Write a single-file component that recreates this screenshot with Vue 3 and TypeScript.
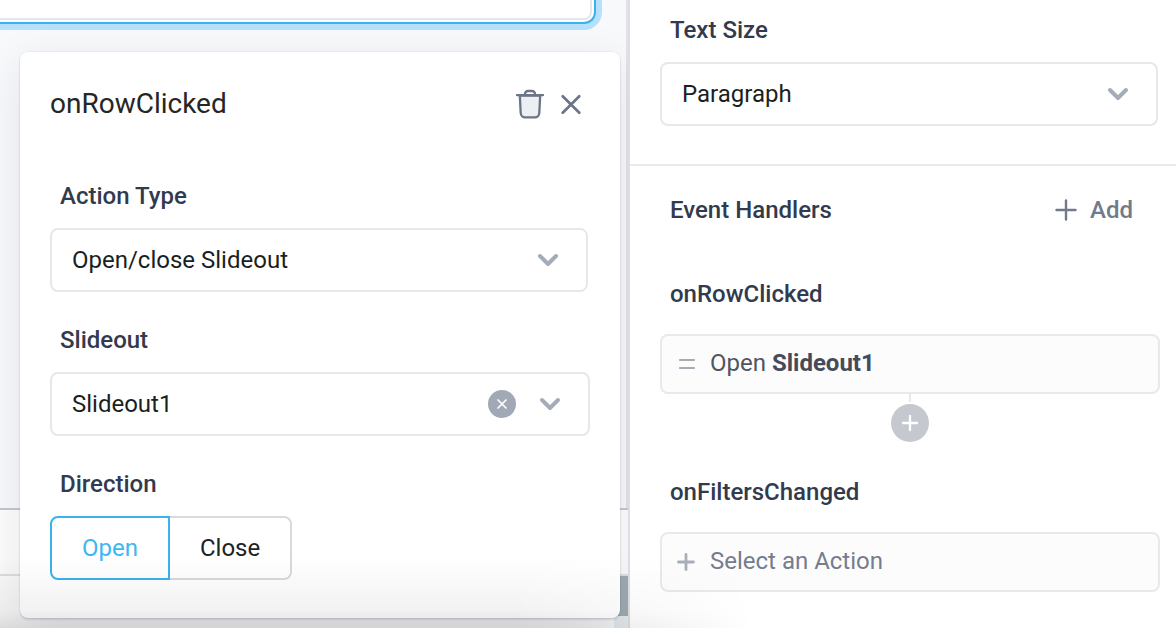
<script setup lang="ts">
import { ref } from 'vue'

type Direction = 'Open' | 'Close'

const textSize = ref('Paragraph')
const actionType = ref('Open/close Slideout')
const slideout = ref('Slideout1')
const direction = ref<Direction>('Open')
const directions: Direction[] = ['Open', 'Close']
</script>

<template>
  <div class="app">
    <main class="canvas">
      <div class="stage">
        <div class="workspace">
          <div class="selected"><div class="selected-inner"></div></div>
        </div>
        <div class="dock">
          <div class="dock-bar"></div>
          <div class="dock-body"></div>
          <div class="dock-foot"></div>
        </div>
      </div>

      <form class="popover" @submit.prevent>
        <header class="popover-head">
          <h2>onRowClicked</h2>
          <button type="button" class="icon-button" aria-label="Delete handler">
            <svg width="30" height="32" viewBox="0 0 30 32" fill="none" stroke="#6b7488" stroke-width="2.300" stroke-linecap="round" stroke-linejoin="round">
              <path d="M4.800 7.500 5.700 25a4.500 4.500 0 0 0 4.500 4.300h9.600a4.500 4.500 0 0 0 4.500-4.300L25.200 7.500Z" fill="#edf0f2" />
              <path d="M2 7.200h26M10 7V6A3 3 0 0 1 13 3h4a3 3 0 0 1 3 3V7" />
            </svg>
          </button>
          <button type="button" class="icon-button" aria-label="Close editor">
            <svg width="20" height="20" viewBox="0 0 20 20" fill="none" stroke="#6b7488" stroke-width="2.700" stroke-linecap="round">
              <path d="m1.700 2.200 16.600 16.600m0-16.600-16.600 16.600" />
            </svg>
          </button>
        </header>

        <div class="field action-field">
          <label class="label" for="action-type">Action Type</label>
          <div class="select">
            <select id="action-type" v-model="actionType">
              <option>Open/close Slideout</option>
            </select>
            <svg class="chevron" width="20" height="12" viewBox="0 0 20 12"><path d="m2 2 8 8 8-8" /></svg>
          </div>
        </div>

        <div class="field">
          <label class="label" for="slideout">Slideout</label>
          <div class="select">
            <select id="slideout" v-model="slideout">
              <option>Slideout1</option>
            </select>
            <button type="button" class="clear" aria-label="Clear slideout" @click="slideout = ''">
              <svg width="10" height="10" viewBox="0 0 10 10" fill="none" stroke="#fff" stroke-width="1.700" stroke-linecap="round">
                <path d="m1 1 8 8m0-8-8 8" />
              </svg>
            </button>
            <svg class="chevron" width="20" height="12" viewBox="0 0 20 12"><path d="m2 2 8 8 8-8" /></svg>
          </div>
        </div>

        <fieldset class="field">
          <legend class="label">Direction</legend>
          <div class="segments">
            <label v-for="item in directions" :key="item" class="segment">
              <input v-model="direction" type="radio" name="direction" :value="item" />
              <span>{{ item }}</span>
            </label>
          </div>
        </fieldset>
      </form>
    </main>

    <aside class="inspector">
      <section class="style-section">
        <label class="label" for="text-size">Text Size</label>
        <div class="select">
          <select id="text-size" v-model="textSize">
            <option>Paragraph</option>
          </select>
          <svg class="chevron" width="20" height="12" viewBox="0 0 20 12"><path d="m2 2 8 8 8-8" /></svg>
        </div>
      </section>

      <section class="events">
        <header class="events-head">
          <h3 class="label">Event Handlers</h3>
          <button type="button" class="add">
            <svg width="22" height="22" viewBox="0 0 22 22" fill="none" stroke="currentColor" stroke-width="2.400" stroke-linecap="round">
              <path d="M11 1.500v19M1.500 11h19" />
            </svg>
            Add
          </button>
        </header>

        <div class="handler">
          <h4 class="label">onRowClicked</h4>
          <button type="button" class="action">
            <svg width="18" height="16" viewBox="0 0 18 16" stroke="#a7abb5" stroke-width="2.200" stroke-linecap="round">
              <path d="M2 5h14M2 13h14" />
            </svg>
            <span>Open <strong>Slideout1</strong></span>
          </button>
          <div class="connector"></div>
          <button type="button" class="append" aria-label="Add another action">
            <svg width="18" height="18" viewBox="0 0 18 18" stroke="#fff" stroke-width="2.300" stroke-linecap="round">
              <path d="M9 2v14M2 9h14" />
            </svg>
          </button>
        </div>

        <div class="handler">
          <h4 class="label">onFiltersChanged</h4>
          <button type="button" class="action empty">
            <svg width="18" height="18" viewBox="0 0 18 18" stroke="#a9aeb9" stroke-width="2.800" stroke-linecap="round">
              <path d="M8 2.500v15M.5 10h15" />
            </svg>
            <span>Select an Action</span>
          </button>
        </div>
      </section>
    </aside>

    <div class="edge-shade"></div>
  </div>
</template>

<style>
body {
  margin: 0;
}
</style>

<style scoped>
*,
*::before,
*::after {
  box-sizing: border-box;
}

.app {
  position: relative;
  display: grid;
  grid-template-columns: minmax(0, 1fr) 46.6%;
  min-height: 100vh;
  overflow: hidden;
  background: #fff;
  color: #1f2225;
  font-family: Roboto, 'Liberation Sans', sans-serif;
  font-size: 24px;
  line-height: 32px;
}

h2,
h3,
h4,
fieldset,
legend {
  margin: 0;
  padding: 0;
  border: 0;
}

button,
select {
  margin: 0;
  padding: 0;
  border: 0;
  background: none;
  color: inherit;
  font: inherit;
  cursor: pointer;
}

svg {
  display: block;
  flex: none;
  overflow: visible;
}

.label {
  display: block;
  padding-left: 10px;
  color: #323a4e;
  font-size: 24px;
  font-weight: 500;
  line-height: 32px;
}

/* Canvas */
.canvas {
  display: grid;
}

.stage,
.popover {
  grid-area: 1 / 1;
}

.stage {
  display: flex;
  flex-direction: column;
  min-width: 0;
}

.workspace {
  flex: 1;
  border-right: 2px solid #e2e3e6;
  background: #f8f9fb;
}

.selected {
  height: 24px;
  margin-right: 30px;
  padding: 0 2px 2px 0;
  border: solid #3ab2ee;
  border-width: 0 2px 2px 0;
  border-radius: 0 0 12px 0;
  background: #fff;
  box-shadow: 0 0 0 6px #b6e0fb;
}

.selected-inner {
  height: 20px;
  border: solid #e6e7ea;
  border-width: 0 2px 2px 0;
  border-radius: 0 0 8px 0;
}

.dock {
  border-top: 2px solid #c3c6cd;
  background: #fdfdfd;
}

.dock-bar {
  height: 66px;
  border-bottom: 2px solid #e0e1e4;
}

.dock-body {
  height: 40px;
  background: linear-gradient(to left, #a2aeb4 14px, transparent 14px);
}

.dock-foot {
  height: 12px;
  background: linear-gradient(to left, #eaeff2 14px, transparent 14px);
}

/* Handler popover */
.popover {
  position: relative;
  margin: 52px 8px 10px 20px;
  padding: 28px 30px 38px;
  border-radius: 8px;
  background: #fff;
  box-shadow:
    0 0 0 1px rgba(20, 30, 60, 0.04),
    0 2px 2px rgba(20, 30, 60, 0.12),
    0 12px 44px rgba(20, 30, 60, 0.1);
}

.popover-head {
  display: flex;
  align-items: center;
  gap: 16px;
  height: 48px;
  margin-bottom: 52px;
  padding-right: 9px;
}

.popover-head h2 {
  flex: 1;
  color: #262626;
  font-size: 28px;
  font-weight: 400;
  line-height: 36px;
}

.field + .field {
  margin-top: 32px;
}

.action-field .select {
  margin-right: 2px;
}

.select {
  display: grid;
  grid-template-columns: minmax(0, 1fr) auto auto;
  align-items: center;
  margin-top: 16px;
}

.select select {
  grid-area: 1 / 1 / 2 / 4;
  width: 100%;
  height: 64px;
  padding: 0 60px 0 20px;
  border: 2px solid #e8e8ea;
  border-radius: 8px;
  background: #fff;
  color: #1b1f22;
  appearance: none;
}

.chevron {
  grid-area: 1 / 3;
  margin-right: 30px;
  pointer-events: none;
  fill: none;
  stroke: #a4abb9;
  stroke-width: 4;
  stroke-linecap: round;
  stroke-linejoin: round;
}

.clear {
  grid-area: 1 / 2;
  display: grid;
  place-items: center;
  width: 28px;
  height: 28px;
  margin-right: 24px;
  border-radius: 50%;
  background: #a2a9b6;
}

.segments {
  display: flex;
  margin-top: 16px;
}

.segment {
  position: relative;
  cursor: pointer;
}

.segment input {
  position: absolute;
  inset: 0;
  margin: 0;
  opacity: 0;
}

.segment span {
  display: block;
  padding: 14px 30px;
  border: 2px solid #d9dadc;
}

.segment:first-child span {
  border-radius: 8px 0 0 8px;
}

.segment:last-child span {
  border-left-width: 0;
  border-radius: 0 8px 8px 0;
}

.segment input:checked + span {
  border-color: #3ab2ee;
  color: #3fb6f2;
}

/* Inspector */
.inspector {
  position: relative;
  border-left: 2px solid #dddee1;
  background: #fff;
}

.style-section {
  padding: 14px 18px 38px 30px;
  border-bottom: 2px solid #e9eaeb;
}

.events {
  padding: 28px 16px 36px 30px;
}

.events-head {
  display: flex;
  align-items: center;
  justify-content: space-between;
  padding-right: 27px;
}

.add {
  display: flex;
  align-items: center;
  gap: 13px;
  color: #707a8b;
  font-weight: 500;
}

.handler {
  margin-top: 52px;
}

.handler + .handler {
  margin-top: 34px;
}

.action {
  display: flex;
  align-items: center;
  gap: 14px;
  width: 100%;
  height: 60px;
  margin-top: 24px;
  padding: 0 16px 2px;
  border: 2px solid #e8e9eb;
  border-radius: 8px;
  background: #fcfcfd;
  color: #4f5563;
  text-align: left;
}

.action strong {
  color: #454b5b;
  font-weight: 700;
}

.action.empty {
  color: #757d8d;
}

.connector {
  width: 2px;
  height: 8px;
  margin: 0 auto 2px;
  background: #e8e9eb;
}

.append {
  display: grid;
  place-items: center;
  width: 38px;
  height: 38px;
  margin: 0 auto;
  border-radius: 50%;
  background: #c5c9cf;
}

/* Shade rising from the lower window edge */
.edge-shade {
  position: absolute;
  right: 36%;
  bottom: 0;
  left: 0;
  height: 72px;
  background: linear-gradient(to top, rgba(0, 0, 0, 0.12), rgba(0, 0, 0, 0.05) 24%, transparent);
  mask-image: linear-gradient(to left, transparent, #000 240px);
  pointer-events: none;
}
</style>
